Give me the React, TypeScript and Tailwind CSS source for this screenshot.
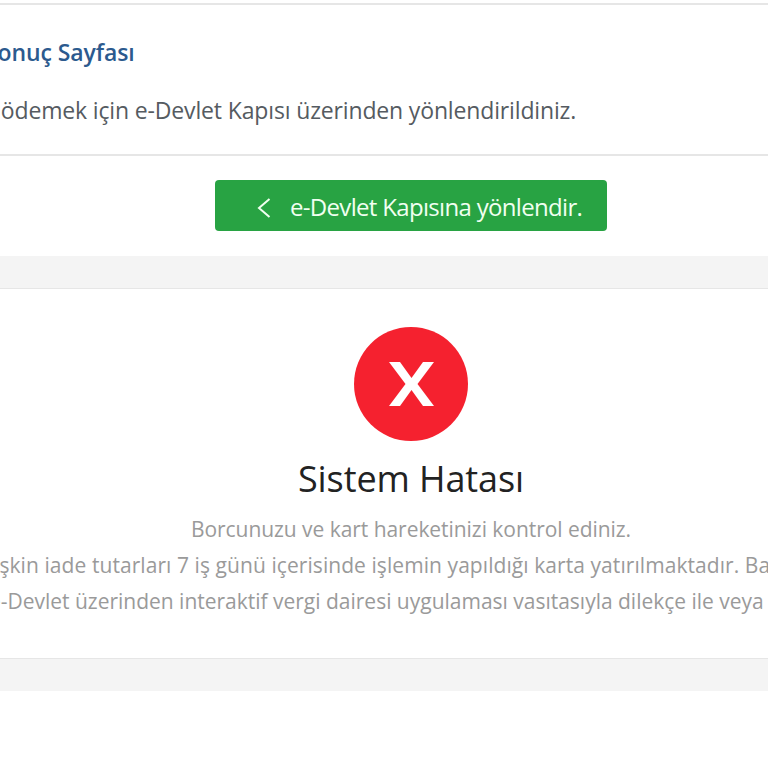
import React from 'react';

const ChevronIcon = () => (
  <svg width="14" height="20" viewBox="0 0 14 20" fill="none" stroke="#f0fff0" strokeWidth="2" className="shrink-0 mt-[4px]">
    <path d="M12.5 1L2 10l10.5 9" />
  </svg>
);

const CrossIcon = () => (
  <svg width="45" height="44" viewBox="0 0 45 44" fill="#ffffff">
    <path d="M0 0H11L22.5 16L34 0H45L28.5 22L45 44H34L22.5 28L11 44H0L16.5 22Z" />
  </svg>
);

export default function App() {
  return (
    <div className="w-[768px] h-[768px] overflow-hidden bg-white font-['Open_Sans',sans-serif]">
      <div className="w-[1400px] ml-[-289px] pt-[3px]">
        {/* top card */}
        <div className="border-t-2 border-[#e6e6e6] border-b-2 h-[153px] pl-[274px] pt-[29px]">
          <h1 className="text-[23px] leading-[36px] font-semibold text-[#2c5a8e] tracking-[-0.1px] whitespace-nowrap">Sonuç Sayfası</h1>
          <p className="mt-[22px] text-[23px] leading-[36px] text-[#555b61] tracking-[-0.15px] ml-[-105px] whitespace-nowrap">Borcunuzu ödemek için e-Devlet Kapısı üzerinden yönlendirildiniz.</p>
        </div>

        <div className="h-[100px] flex justify-center pt-[24px]">
          <button className="w-[392px] h-[51px] rounded-[4px] bg-[#28a343] text-[#f0fff0] flex items-center pl-[42px] gap-[19px]">
            <ChevronIcon />
            <span className="text-[24px] tracking-[-0.68px] whitespace-nowrap mt-[2px]">e-Devlet Kapısına yönlendir.</span>
          </button>
        </div>

        <div className="h-[33px] bg-[#f4f4f4] border-b border-[#e6e6e6]" />

        {/* result */}
        <div className="flex flex-col items-center pt-[38px] h-[369px]">
          <div className="w-[114px] h-[114px] rounded-full bg-[#f5212f] flex items-center justify-center shrink-0">
            <CrossIcon />
          </div>
          <h2 className="mt-[14px] text-[36px] leading-[48px] text-[#222222] tracking-[-0.1px]">Sistem Hatası</h2>
          <div className="mt-[8px] text-[21px] leading-[36px] text-[#9a9a9a] text-center whitespace-nowrap">
            <p className="tracking-[-0.05px]">Borcunuzu ve kart hareketinizi kontrol ediniz.</p>
            <p className="tracking-[0.07px]">Yapılan işlemlere ilişkin iade tutarları 7 iş günü içerisinde işlemin yapıldığı karta yatırılmaktadır. Bankanızla görüşebilirsiniz.</p>
            <p className="tracking-[-0.01px]">Ayrıca e-Devlet üzerinden interaktif vergi dairesi uygulaması vasıtasıyla dilekçe ile veya elden iletiniz.</p>
          </div>
        </div>

        <div className="h-[33px] bg-[#f4f4f4] border-t border-[#e6e6e6]" />
      </div>
    </div>
  );
}
